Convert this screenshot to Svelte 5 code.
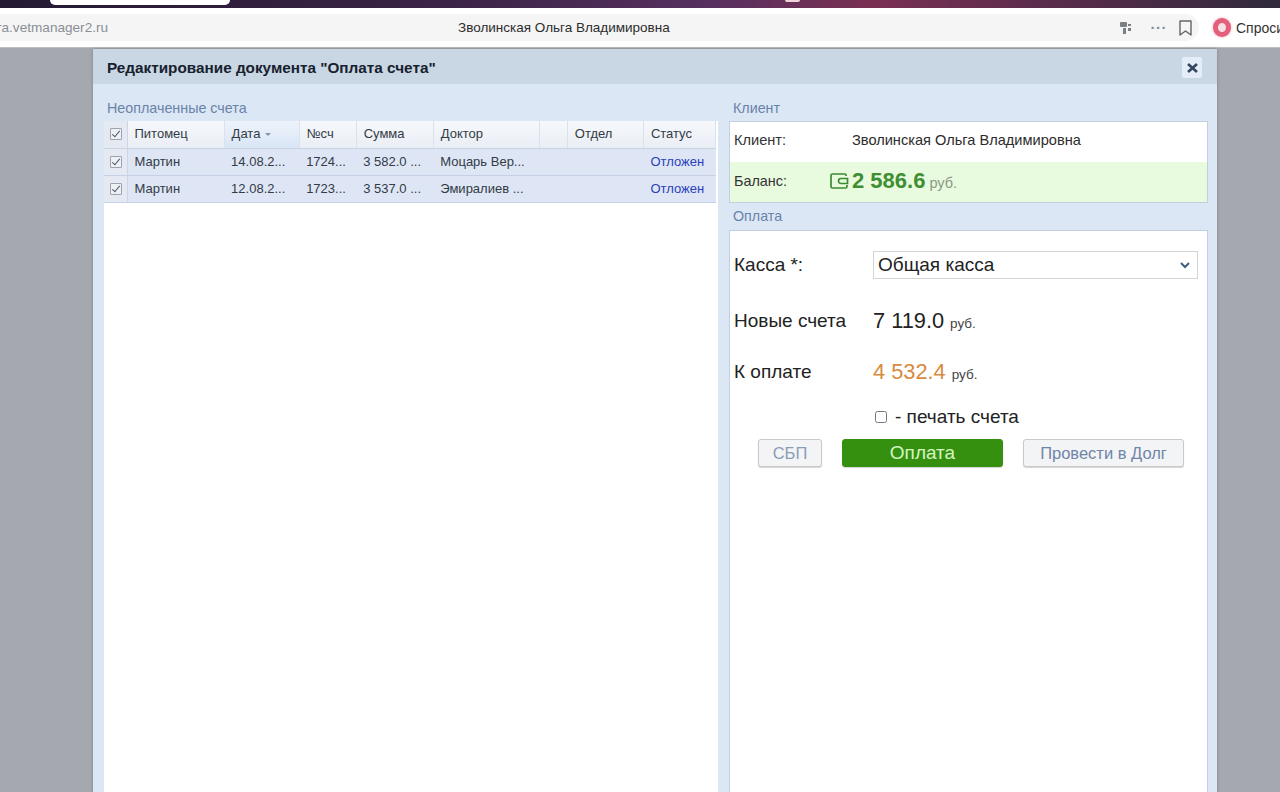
<script>
	const columns = [
		{ title: 'Питомец', width: 97 },
		{ title: 'Дата', width: 75, sorted: true },
		{ title: '№сч', width: 57 },
		{ title: 'Сумма', width: 77 },
		{ title: 'Доктор', width: 106 },
		{ title: '', width: 28 },
		{ title: 'Отдел', width: 76 },
		{ title: 'Статус', width: 72 }
	];

	const invoices = [
		{ pet: 'Мартин', date: '14.08.2...', num: '1724...', sum: '3 582.0 ...', doctor: 'Моцарь Вер...', status: 'Отложен' },
		{ pet: 'Мартин', date: '12.08.2...', num: '1723...', sum: '3 537.0 ...', doctor: 'Эмиралиев ...', status: 'Отложен' }
	];
</script>

<div class="page">
	<div class="tabs">
		<div class="tab"></div>
		<div class="tab-dot"></div>
	</div>

	<div class="toolbar">
		<div class="address">
			<span class="url">ra.vetmanager2.ru</span>
			<span class="page-title">Зволинская Ольга Владимировна</span>
			<div class="address-icons">
				<svg class="translate" width="12" height="14" viewBox="0 0 12 14" fill="#7b8085">
					<rect x="0" y="1" width="7" height="5" rx="1" />
					<rect x="3" y="7" width="3" height="6" />
					<rect x="8" y="3" width="3" height="2" />
					<rect x="8" y="7" width="3" height="3" />
				</svg>
				<span class="dots">···</span>
				<svg width="13" height="16" viewBox="0 0 13 16" fill="none" stroke="#62666b" stroke-width="1.4">
					<path d="M1 1h11v14L6.500 11 1 15z" stroke-linejoin="round" />
				</svg>
			</div>
		</div>
		<div class="ask">
			<span class="ring"></span>
			<span>Спроси</span>
		</div>
	</div>

	<div class="desk">
		<div class="modal">
			<div class="modal-head">
				<span>Редактирование документа "Оплата счета"</span>
				<button class="close" aria-label="Закрыть">
					<svg width="11" height="10" viewBox="0 0 11 10" stroke="#34475e" stroke-width="2.6">
						<path d="M1 1l9 8M10 1l-9 8" />
					</svg>
				</button>
			</div>

			<div class="modal-body">
				<section class="left">
					<h3>Неоплаченные счета</h3>
					<div class="grid-panel">
						<table>
							<colgroup>
								<col style="width: 23px" />
								{#each columns as col}
									<col style="width: {col.width}px" />
								{/each}
							</colgroup>
							<thead>
								<tr>
									<th class="check-cell"><span class="check"></span></th>
									{#each columns as col}
										<th class:sorted={col.sorted}>
											{col.title}
											{#if col.sorted}<span class="arrow"></span>{/if}
										</th>
									{/each}
								</tr>
							</thead>
							<tbody>
								{#each invoices as row}
									<tr>
										<td class="check-cell"><span class="check"></span></td>
										<td>{row.pet}</td>
										<td>{row.date}</td>
										<td>{row.num}</td>
										<td>{row.sum}</td>
										<td>{row.doctor}</td>
										<td></td>
										<td></td>
										<td class="status">{row.status}</td>
									</tr>
								{/each}
							</tbody>
						</table>
					</div>
				</section>

				<section class="right">
					<h3>Клиент</h3>
					<div class="client-box">
						<div class="client-row">
							<span class="client-label">Клиент:</span>
							<span>Зволинская Ольга Владимировна</span>
						</div>
						<div class="client-row balance">
							<span class="client-label">Баланс:</span>
							<svg class="wallet" width="19" height="16" viewBox="0 0 19 16" fill="none" stroke="#3c8a34" stroke-width="1.7">
								<path d="M16 3V2.200C16 1.500 15.500 1 14.800 1H2.500C1.700 1 1 1.700 1 2.500v11c0 .8.7 1.500 1.500 1.500h13c.8 0 1.500-.7 1.500-1.500V12" />
								<path d="M17.500 5.500H11a2.500 2.500 0 0 0 0 5h6.500z" />
							</svg>
							<b>2 586.6</b>
							<span class="currency">руб.</span>
						</div>
					</div>

					<h3 class="pay-title">Оплата</h3>
					<div class="pay-box">
						<div class="pay-row cash">
							<span class="pay-label">Касса *:</span>
							<div class="select">
								<span>Общая касса</span>
								<svg width="10" height="7" viewBox="0 0 10 7" fill="none" stroke="#3f5f80" stroke-width="2">
									<path d="M1 1l4 4 4-4" />
								</svg>
							</div>
						</div>
						<div class="pay-row new">
							<span class="pay-label">Новые счета</span>
							<span class="amount">7 119.0</span>
							<span class="rub">руб.</span>
						</div>
						<div class="pay-row due">
							<span class="pay-label">К оплате</span>
							<span class="amount orange">4 532.4</span>
							<span class="rub">руб.</span>
						</div>
						<label class="print">
							<input type="checkbox" />
							<span>- печать счета</span>
						</label>
						<div class="buttons">
							<button class="btn sbp">СБП</button>
							<button class="btn pay">Оплата</button>
							<button class="btn debt">Провести в Долг</button>
						</div>
					</div>
				</section>
			</div>
		</div>
	</div>
</div>

<style>
	:global(body) {
		margin: 0;
		background: #a5a8af;
		font-family: 'Liberation Sans', Arial, sans-serif;
	}

	.page {
		display: flex;
		flex-direction: column;
		height: 792px;
		overflow: hidden;
	}

	.tabs {
		display: flex;
		height: 8px;
		flex-shrink: 0;
		background: linear-gradient(90deg, #241a33 0%, #3b2345 35%, #55305f 55%, #7a2f52 68%, #5a2c4c 82%, #2f2a3c 100%);
	}

	.tab {
		width: 180px;
		height: 5px;
		margin-left: 50px;
		background: #fff;
		border-radius: 0 0 6px 6px;
	}

	.tab-dot {
		width: 15px;
		height: 2px;
		margin-left: 555px;
		background: #f0d4dc;
		border-radius: 0 0 7px 7px;
	}

	.toolbar {
		display: flex;
		align-items: center;
		height: 39px;
		flex-shrink: 0;
		background: #fff;
	}

	.address {
		position: relative;
		display: flex;
		align-items: center;
		flex-shrink: 0;
		width: 1199px;
		height: 27px;
		background: #f5f5f5;
		border-radius: 0 14px 14px 0;
	}

	.url {
		margin-left: -3px;
		font-size: 13.6px;
		color: #8b8f94;
	}

	.page-title {
		position: absolute;
		left: 458px;
		font-size: 13.5px;
		color: #2c2c2c;
	}

	.address-icons {
		display: flex;
		align-items: center;
		margin-left: auto;
		margin-right: 7px;
		gap: 12px;
	}

	.translate {
		margin-right: 7px;
	}

	.dots {
		font-size: 15px;
		font-weight: 700;
		color: #8a8d91;
		letter-spacing: 0.5px;
	}

	.ask {
		display: flex;
		align-items: center;
		flex-shrink: 0;
		gap: 5px;
		margin-left: 14px;
		font-size: 14px;
		color: #333;
		white-space: nowrap;
	}

	.ring {
		width: 8px;
		height: 9px;
		border: 5px solid #e2607c;
		border-radius: 50%;
		background: #f8dfe4;
		box-shadow: 0 0 3px #f0a5b5;
		flex-shrink: 0;
	}

	.desk {
		flex: 1;
		padding: 1px 0 0 93px;
		background: #a5a8af;
		border-top: 1px solid #bcbec3;
		box-sizing: border-box;
	}

	.modal {
		width: 1124px;
		height: 100%;
		background: #dce7f5;
		box-shadow: 0 0 3px #7f838a;
	}

	.modal-head {
		display: flex;
		align-items: center;
		justify-content: space-between;
		height: 35px;
		padding: 2px 15px 0 14px;
		box-sizing: border-box;
		background: #c9d6e4;
		font-size: 15.3px;
		font-weight: 700;
		color: #17212e;
	}

	.close {
		display: flex;
		align-items: center;
		justify-content: center;
		width: 20px;
		height: 21px;
		padding: 0;
		border: none;
		border-radius: 2px;
		background: #e4edf8;
	}

	.modal-body {
		display: flex;
		gap: 11px;
		padding: 0 9px 0 11px;
		height: 100%;
		background: #dce7f5;
	}

	h3 {
		margin: 0;
		height: 37px;
		padding: 16px 0 0 3px;
		box-sizing: border-box;
		font-size: 14.3px;
		font-weight: 400;
		line-height: 16px;
		color: #6a83a8;
	}

	.left {
		width: 614px;
		flex-shrink: 0;
	}

	.grid-panel {
		height: 700px;
		background: #fff;
	}

	table {
		width: 612px;
		border-collapse: collapse;
		table-layout: fixed;
		font-size: 13px;
	}

	th {
		height: 27px;
		padding: 0 7px 2px;
		box-sizing: border-box;
		background: linear-gradient(#f6f8fb, #e9eef5);
		border-right: 1px solid #dbe2ec;
		border-bottom: 1px solid #c9d3e2;
		font-weight: 400;
		text-align: left;
		color: #333b45;
	}

	th.sorted {
		background: linear-gradient(#eef3fa, #d8e5f6);
	}

	.arrow {
		display: inline-block;
		margin: 0 0 2px 1px;
		border: 3px solid transparent;
		border-top-color: #8a96a6;
		border-bottom: none;
	}

	td {
		height: 27px;
		padding: 0 7px 1px;
		box-sizing: border-box;
		overflow: hidden;
		white-space: nowrap;
		background: #dee6f5;
		border-bottom: 1px solid #c6d0e6;
		color: #333b45;
	}

	td.status {
		color: #2a3fb8;
	}

	th.check-cell,
	td.check-cell {
		padding: 0 0 0 6px;
		background: #e4e9f2;
		border-right: 1px solid #ccd6e6;
	}

	.check {
		display: block;
		position: relative;
		width: 12px;
		height: 12px;
		box-sizing: border-box;
		background: #eef0f3;
		border: 1px solid #9aa3af;
		border-radius: 1px;
	}

	.check::after {
		content: '';
		position: absolute;
		left: 3px;
		top: 0;
		width: 3px;
		height: 7px;
		border: solid #4a5a70;
		border-width: 0 1.5px 1.5px 0;
		transform: rotate(40deg);
	}

	.right {
		width: 479px;
		flex-shrink: 0;
	}

	.right h3 {
		padding-left: 4px;
	}

	.client-box {
		background: #fff;
		border: 1px solid #c3cfde;
		font-size: 14.6px;
		color: #2c2c2c;
	}

	.client-row {
		display: flex;
		align-items: center;
		box-sizing: border-box;
		height: 40px;
		padding: 0 0 4px 4px;
	}

	.client-label {
		width: 118px;
		flex-shrink: 0;
		color: #333;
	}

	.balance {
		height: 40px;
		padding-bottom: 2px;
		background: #e9fbdf;
		font-size: 14.4px;
	}

	.balance .client-label {
		width: 96px;
	}

	.wallet {
		margin-right: 3px;
	}

	.balance b {
		font-size: 22px;
		color: #3f8f32;
	}

	.currency {
		margin: 4px 0 0 4px;
		font-size: 14.5px;
		color: #8a9a84;
	}

	.right .pay-title {
		height: 27px;
		padding-top: 5px;
	}

	.pay-box {
		height: 600px;
		padding: 20px 9px 0 4px;
		box-sizing: border-box;
		background: #fff;
		border: 1px solid #c3cfde;
		border-bottom: none;
	}

	.pay-row {
		display: flex;
		align-items: center;
		font-size: 19px;
		color: #222;
	}

	.pay-label {
		width: 139px;
		flex-shrink: 0;
	}

	.select {
		display: flex;
		align-items: center;
		justify-content: space-between;
		flex: 1;
		height: 28px;
		padding: 0 7px 0 4px;
		box-sizing: border-box;
		background: #fff;
		border: 1px solid #d5d5d5;
		font-size: 19px;
	}

	.new {
		margin-top: 29px;
	}

	.due {
		margin-top: 25px;
	}

	.amount {
		font-size: 21.8px;
	}

	.orange {
		color: #d88a3e;
	}

	.rub {
		margin: 4px 0 0 6px;
		font-size: 13.5px;
		color: #444;
	}

	.print {
		display: flex;
		align-items: center;
		gap: 8px;
		margin: 21px 0 0 140px;
		font-size: 19px;
		color: #222;
	}

	.print input {
		width: 12px;
		height: 12px;
		margin: 0 0 0 1px;
	}

	.buttons {
		display: flex;
		align-items: center;
		margin: 11px 0 0 24px;
	}

	.btn {
		height: 28px;
		padding: 0;
		box-sizing: border-box;
		border: 1px solid #c9c9c9;
		border-radius: 3px;
		background: #f3f4f6;
		box-shadow: 0 1px 1px #d5d5d5;
		font-family: inherit;
		font-size: 16.500px;
		color: #6f86a8;
	}

	.sbp {
		width: 64px;
		color: #8a9cb6;
	}

	.pay {
		width: 161px;
		margin-left: 20px;
		background: #35900f;
		border-color: #35900f;
		font-size: 19px;
		color: #d6f5c0;
	}

	.debt {
		width: 161px;
		margin-left: 20px;
	}
</style>
